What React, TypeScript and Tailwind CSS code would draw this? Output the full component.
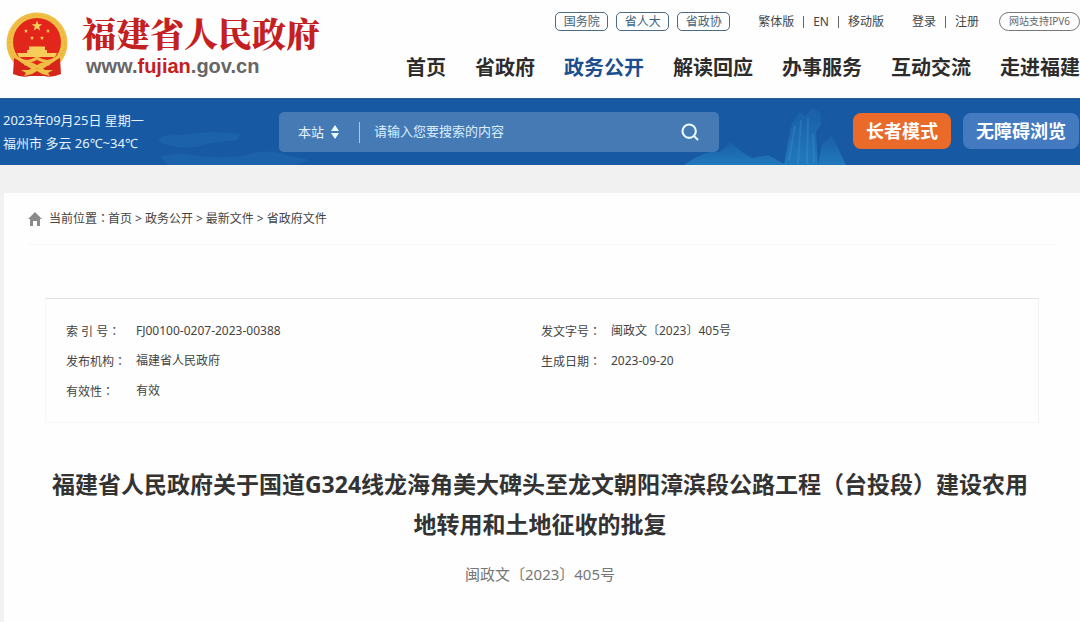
import { useState } from "react";
import { Search } from "lucide-react";

const departments = ["国务院", "省人大", "省政协"];

const navItems = ["首页", "省政府", "政务公开", "解读回应", "办事服务", "互动交流", "走进福建"];

const breadcrumbs = ["首页", "政务公开", "最新文件", "省政府文件"];

const leftMeta = [
  { label: "索 引 号", value: "FJ00100-0207-2023-00388" },
  { label: "发布机构", value: "福建省人民政府" },
  { label: "有效性", value: "有效" },
];

const rightMeta = [
  { label: "发文字号", value: "闽政文〔2023〕405号" },
  { label: "生成日期", value: "2023-09-20" },
];

const star = "0,-10 2.4,-3.2 9.5,-3.1 3.8,1.2 5.9,8.1 0,4 -5.9,8.1 -3.8,1.2 -9.5,-3.1 -2.4,-3.2";

function Emblem() {
  return (
    <svg viewBox="0 0 62 66" className="h-[66px] w-[62px] shrink-0" aria-hidden="true">
      <circle cx="31" cy="31" r="30.5" fill="#f0be45" />
      <circle cx="31" cy="31" r="27.5" fill="none" stroke="#e9b03c" strokeWidth="1" strokeDasharray="3 2" />
      <circle cx="31" cy="30" r="24" fill="#e3261b" />
      <polygon points={star} transform="translate(31 14) scale(.55)" fill="#f7d35c" />
      <polygon points={star} transform="translate(20 19) scale(.22)" fill="#f7d35c" />
      <polygon points={star} transform="translate(42 19) scale(.22)" fill="#f7d35c" />
      <polygon points={star} transform="translate(26 26) scale(.22)" fill="#f7d35c" />
      <polygon points={star} transform="translate(36 26) scale(.22)" fill="#f7d35c" />
      <path d="M23 34.500 H39 V38 H41 V41 H51 L49 45 H13 L11 41 H21 V38 H23 Z" fill="#f5cd58" />
      <path d="M8 46 Q13 48 16 51 L24 56 L38 56 L46 51 Q49 48 54 46 L55 62 Q46 66 38 64 L24 64 Q16 66 7 62 Z" fill="#d6261c" />
      <path d="M12 46 Q20 53 31 46 Q42 53 50 46" fill="none" stroke="#f0be45" strokeWidth="3" />
      <path d="M18 52 Q25 50 31 55 Q37 50 44 52" fill="none" stroke="#f0be45" strokeWidth="3" />
      <path d="M15 58 H23 Q27 53 31 57 Q35 53 39 58 H47 L42 61 L44 64 L36 62 L31 59 L26 62 L18 64 L20 61 Z" fill="#f0be45" />
    </svg>
  );
}

// Faint clouds and rooftops behind the search bar
function BannerArt() {
  return (
    <svg
      viewBox="0 0 1080 67"
      preserveAspectRatio="xMidYMax slice"
      className="absolute inset-0 h-full w-full"
      aria-hidden="true"
    >
      <defs>
        <linearGradient id="mist" x1="0" y1="0" x2="0" y2="1">
          <stop offset="0" stopColor="#2b8ed0" stopOpacity=".12" />
          <stop offset="1" stopColor="#2b9ad8" stopOpacity=".5" />
        </linearGradient>
      </defs>
      <g fill="#2b7fc4" opacity=".25">
        <path d="M158 43 Q166 34 182 37 Q210 32 240 36 L238 42 Q210 44 196 49 Q174 52 158 43Z" />
        <path d="M160 59 Q178 53 192 57 Q228 62 250 56 Q268 50 290 58 L310 62 L296 67 H168Z" />
      </g>
      <g fill="url(#mist)">
        <path d="M684 67 Q704 52 720 54 L730 44 L742 54 L752 60 L768 57 L786 67Z" />
        <path d="M784 67 L788 44 L792 26 L799 14 L806 18 L812 9 L820 14 L821 26 L816 34 L818 67Z" />
        <path d="M818 67 L822 46 L832 38 L838 50 L846 67Z" />
      </g>
      <path d="M789 62 L795 28 M798 66 L801 22 M807 66 L808 20 M814 64 L813 36" stroke="#5ba9dd" strokeWidth="2" opacity=".2" />
    </svg>
  );
}

// The traditional face centres the full-width colon
function Colon() {
  return <span className="font-['Noto_Sans_CJK_TC',sans-serif]">：</span>;
}

function MetaList({ items }: { items: { label: string; value: string }[] }) {
  return (
    <dl>
      {items.map((item) => (
        <div key={item.label} className="flex h-[30px] items-center">
          <dt className="w-[70px] shrink-0">
            {item.label}
            <Colon />
          </dt>
          <dd>{item.value}</dd>
        </div>
      ))}
    </dl>
  );
}

export default function App() {
  const [scope, setScope] = useState("本站");
  const [keyword, setKeyword] = useState("");

  return (
    <div className="min-h-screen overflow-x-hidden bg-[#f1f1f1] font-['Noto_Sans','Noto_Sans_CJK_SC',sans-serif] text-xs text-[#444]">
      <header className="flex h-[98px] justify-between bg-[#fefefe]">
        <a href="#" className="flex items-start gap-[14px] pt-3 pl-[6px]">
          <Emblem />
          <div className="whitespace-nowrap">
            <div className="font-['Noto_Serif_CJK_SC','Noto_Sans_CJK_SC',serif] text-[34px] leading-[42px] font-black text-[#c4201f]">
              福建省人民政府
            </div>
            <div className="pl-1 font-['Liberation_Sans',sans-serif] text-[20px] leading-[24px] font-bold text-[#666]">
              www.<span className="text-[#c4201f]">fujian</span>.gov.cn
            </div>
          </div>
        </a>

        <div className="flex flex-col items-end whitespace-nowrap">
          <div className="flex items-center pt-3">
            <div className="flex gap-2">
              {departments.map((name) => (
                <a
                  key={name}
                  href="#"
                  className="flex h-[19px] w-[53px] items-center justify-center rounded-[5px] border border-[#4d6a80] text-[#41637c]"
                >
                  {name}
                </a>
              ))}
            </div>
            <div className="ml-7 flex items-center gap-[9px]">
              <a href="#">繁体版</a>
              <span className="h-3 w-px bg-[#666]" />
              <a href="#">EN</a>
              <span className="h-3 w-px bg-[#666]" />
              <a href="#">移动版</a>
            </div>
            <div className="ml-7 flex items-center gap-[9px]">
              <a href="#">登录</a>
              <span className="h-3 w-px bg-[#666]" />
              <a href="#">注册</a>
            </div>
            <a
              href="#"
              className="ml-5 flex h-[19px] w-[81px] items-center justify-center rounded-full border border-[#777] text-[10px] text-[#666]"
            >
              网站支持IPV6
            </a>
          </div>
          <nav className="mt-[22px] flex gap-[29px] text-[20px] leading-[30px] font-bold text-[#2c2c2c]">
            {navItems.map((item) => (
              <a key={item} href="#" className={item === "政务公开" ? "text-[#1c4f8f]" : ""}>
                {item}
              </a>
            ))}
          </nav>
        </div>
      </header>

      <div className="relative h-[67px] border-t border-[#2a5a8c] bg-[#1759a2]">
        <BannerArt />
        <div className="relative flex h-full items-center text-[13px] text-[#e4f3ff]">
          <div className="w-[279px] shrink-0 pl-[3px] leading-[23px]">
            <p>2023年09月25日 星期一</p>
            <p>福州市 多云 26℃~34℃</p>
          </div>
          <form
            className="flex h-10 w-[440px] items-center rounded-[5px] bg-[#457ab5]"
            onSubmit={(e) => e.preventDefault()}
          >
            <div className="relative ml-[19px] w-[62px] border-r border-[#a8cbe8]">
              <select
                aria-label="搜索范围"
                value={scope}
                onChange={(e) => setScope(e.target.value)}
                className="block w-full appearance-none bg-transparent leading-[21px] outline-none"
              >
                <option>本站</option>
                <option>全网</option>
              </select>
              <svg viewBox="0 0 8 14" className="pointer-events-none absolute top-[3px] right-5 h-[14px] w-2" aria-hidden="true">
                <path d="M4 0 L8 6 H0Z M4 14 L0 8 H8Z" fill="#e8fbff" />
              </svg>
            </div>
            <input
              type="text"
              aria-label="搜索内容"
              value={keyword}
              onChange={(e) => setKeyword(e.target.value)}
              placeholder="请输入您要搜索的内容"
              className="min-w-0 flex-1 bg-transparent px-[14px] outline-none placeholder:text-[#d9efff]"
            />
            <button type="submit" aria-label="搜索" className="mr-[19px]">
              <Search className="size-5 text-[#e8fbff]" strokeWidth={2.5} />
            </button>
          </form>
          <div className="mr-px ml-auto flex gap-3 pb-0.5 text-[18px] font-bold text-white">
            <button type="button" className="h-9 w-[98px] rounded-lg bg-[#ea6a2a]">
              长者模式
            </button>
            <button type="button" className="h-9 w-[116px] rounded-lg bg-[#447ac0]">
              无障碍浏览
            </button>
          </div>
        </div>
      </div>

      <main className="mt-7 ml-1 min-h-[429px] bg-[#fefefe] pb-9">
        <nav className="mx-6 flex h-[52px] items-center gap-[3px] border-b border-[#f7f7f7]">
          <svg viewBox="0 0 14 14" className="mr-1 size-[14px]" aria-hidden="true">
            <path d="M7 0 L14 7 H12 V14 H9 V9 H5 V14 H2 V7 H0Z" fill="#8a8a8a" />
          </svg>
          <div>
            当前位置
            <Colon />
          </div>
          <ol className="-ml-1 flex gap-[3px]">
            {breadcrumbs.map((crumb, i) => (
              <li key={crumb} className="flex gap-[3px]">
                {i > 0 && <span>&gt;</span>}
                <a href="#">{crumb}</a>
              </li>
            ))}
          </ol>
        </nav>

        <section className="mx-[41px] mt-[53px] grid h-[125px] grid-cols-2 border border-t-[#e2e2e2] border-r-[#f1f1f1] border-b-[#f7f7f7] border-l-[#f8f8f8] pr-[22px] pl-5 pt-[17px]">
          <MetaList items={leftMeta} />
          <MetaList items={rightMeta} />
        </section>

        <article className="mt-[41px] pr-[42px] pl-[38px] text-center">
          <h1 className="text-[23px] leading-10 font-bold text-[#333]">
            福建省人民政府关于国道G324线龙海角美大碑头至龙文朝阳漳滨段公路工程（台投段）建设农用地转用和土地征收的批复
          </h1>
          <p className="mt-[19px] text-[15px] leading-[22px] text-[#777]">闽政文〔2023〕405号</p>
        </article>
      </main>
    </div>
  );
}
